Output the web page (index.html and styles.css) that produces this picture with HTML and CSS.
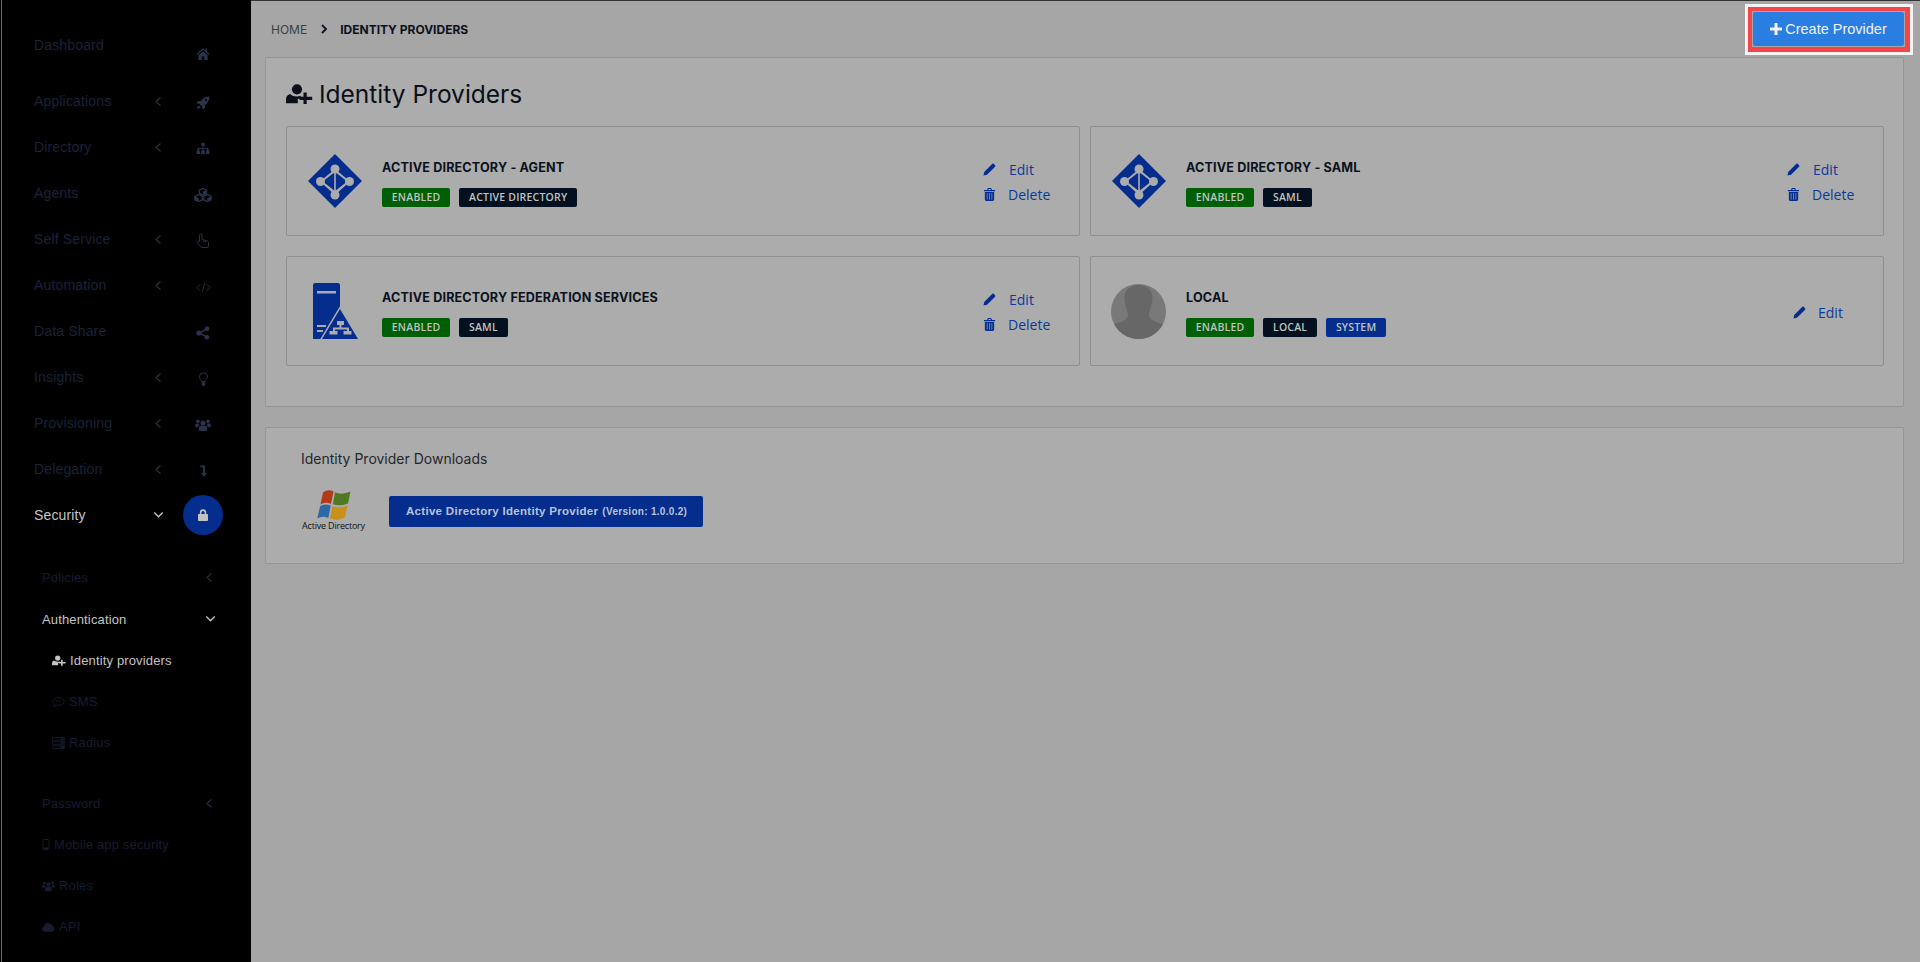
FILE: index.html
```html
<!DOCTYPE html>
<html lang="en">
<head>
<meta charset="utf-8">
<title>Identity Providers</title>
<link rel="stylesheet" href="styles.css">
</head>
<body>
<svg class="defs" width="0" height="0" aria-hidden="true">
  <symbol id="i-chev-left" viewBox="0 0 8 11"><path d="M6.500 1.500 2 5.500l4.500 4" fill="none" stroke="currentColor" stroke-width="1.200"/></symbol>
  <symbol id="i-chev-down" viewBox="0 0 11 8"><path d="M1.300 1.500 5.500 5.700l4.200-4.200" fill="none" stroke="currentColor" stroke-width="1.400"/></symbol>
  <symbol id="i-home" viewBox="0 0 14 14"><path d="M7 1 0.500 7l.8.9L7 2.800l5.700 5.100.8-.9L11 4.700V1.500H9.600v2zM2.400 8.200V13h3.400V9.400h2.400V13h3.400V8.200L7 4.200z" fill="currentColor"/></symbol>
  <symbol id="i-rocket" viewBox="0 0 14 14"><path d="M13.500 .5C9.500 .6 6.800 2.300 4.800 5H2L.5 7.500l3 .4L6 10.500l.5 3L9 12V9.200c2.700-2 4.400-4.700 4.500-8.700zM10 3a1 1 0 1 1 0 2 1 1 0 0 1 0-2zM3 9.500c-1.200.4-1.800 1.700-2 3.500 1.800-.2 3.100-.8 3.500-2z" fill="currentColor"/></symbol>
  <symbol id="i-sitemap" viewBox="0 0 14 14"><path d="M5.300 1h3.400v3H7.500v2h5v2.500h1V12h-3.500V8.500h1V7.100H7.500v1.400h1.200V12H5.300V8.500h1.200V7.100H3v1.400h1V12H.5V8.500h1V6h5V4H5.300z" fill="currentColor"/></symbol>
  <symbol id="i-cubes" viewBox="0 0 18 14"><path d="M9 .5l3.600 1.400v3.400L9 6.800 5.400 5.300V1.900zM4.600 6.600l3.700 1.500v3.700L4.600 13.500.9 11.800V8.100zM13.400 6.600l3.700 1.500v3.700l-3.700 1.700-3.700-1.700V8.100z" fill="none" stroke="currentColor" stroke-width="1.300"/><path d="M9 3.600v3.200L12.600 5.300V2.100zM4.600 10v3.500l-3.700-1.700V8.300zM13.400 10v3.500l3.700-1.700V8.300z" fill="currentColor"/></symbol>
  <symbol id="i-hand" viewBox="0 0 14 16"><path d="M3.500 8.500V2.200a1.200 1.200 0 0 1 2.400 0V6.500l5 1.200c1 .3 1.600 1 1.600 2V12c0 .8-.3 1.500-.6 2.500H5.500L1.200 10c-1-1.300.8-2.700 2.300-1.500zM7.800 7v2M9.600 7.400v2" fill="none" stroke="currentColor" stroke-width="1"/></symbol>
  <symbol id="i-code" viewBox="0 0 16 12"><path d="M4.500 2.500 1 6l3.500 3.500M11.500 2.500 15 6l-3.500 3.500M9.500 1 6.500 11" fill="none" stroke="currentColor" stroke-width="1"/></symbol>
  <symbol id="i-share" viewBox="0 0 14 14"><path d="M11 2.800 3 7l8 4.200" fill="none" stroke="currentColor" stroke-width="1.500"/><circle cx="11" cy="2.800" r="2.300" fill="currentColor"/><circle cx="3" cy="7" r="2.600" fill="currentColor"/><circle cx="11" cy="11.200" r="2.300" fill="currentColor"/></symbol>
  <symbol id="i-bulb" viewBox="0 0 10 15"><path d="M3.300 9.500C3 8 1 7 1 4.800a4 4 0 0 1 8 0C9 7 7 8 6.700 9.500z" fill="none" stroke="currentColor" stroke-width="1"/><path d="M3.200 10.300h3.600v2l-1 1.700H4.200l-1-1.700z" fill="currentColor"/></symbol>
  <symbol id="i-users" viewBox="0 0 16 14"><circle cx="8" cy="5" r="2.500" fill="currentColor"/><circle cx="3" cy="3.200" r="1.800" fill="currentColor"/><circle cx="13" cy="3.200" r="1.800" fill="currentColor"/><path d="M4 13V9.500C4 8.300 5 7.800 6 7.800h4c1 0 2 .5 2 1.700V13zM.3 9V7c0-1 .8-1.500 1.500-1.500h1.700c.2 1 .7 1.500 1.200 2C3.500 7.800 3 8.300 3 9zM15.700 9V7c0-1-.8-1.500-1.500-1.500h-1.700c-.2 1-.7 1.500-1.200 2 1.200.3 1.700.8 1.700 1.500z" fill="currentColor"/></symbol>
  <symbol id="i-level" viewBox="0 0 10 14"><path d="M1.500 1.500H7V9h2l-3 4-3-4h2V3.300H2.800z" fill="currentColor"/></symbol>
  <symbol id="i-lock" viewBox="0 0 10 12"><path d="M1.800 5V3.500a3.200 3.200 0 0 1 6.400 0V5H9.200c.4 0 .8.300.8.800v5.400c0 .4-.4.800-.8.800H.8a.8.8 0 0 1-.8-.8V5.800C0 5.300.4 5 .8 5zM3.400 5h3.200V3.500a1.600 1.600 0 0 0-3.200 0z" fill="currentColor"/></symbol>
  <symbol id="i-user-plus" viewBox="0 0 27 20"><circle cx="11" cy="5.300" r="5.100" fill="currentColor"/><path d="M0 19.300v-3.800c0-3.200 2-5.300 4.500-5.300 1.500 1.300 3.800 2.300 6.500 2.300 1.500 0 2.700-.3 3.800-.8v3.100h-3v4.500z" fill="currentColor"/><path d="M17.500 8.500h3.200v4.200h5.500V16h-5.500v4h-3.200v-4h-4v-3.300h4z" fill="currentColor"/></symbol>
  <symbol id="i-comment" viewBox="0 0 14 12"><path d="M7 1c3.300 0 6 1.900 6 4.300S10.300 9.600 7 9.600c-.7 0-1.300-.1-1.900-.2L2.200 11l.7-2.600C1.700 7.600 1 6.500 1 5.300 1 2.900 3.700 1 7 1z" fill="none" stroke="currentColor"/><circle cx="4.500" cy="5.300" r=".8" fill="currentColor"/><circle cx="7" cy="5.300" r=".8" fill="currentColor"/><circle cx="9.500" cy="5.300" r=".8" fill="currentColor"/></symbol>
  <symbol id="i-server" viewBox="0 0 12 11"><path d="M.5 .5h11v2.400H.5zM.5 4.300h11v2.400H.5zM.5 8.100h11v2.400H.5z" fill="none" stroke="currentColor" stroke-width=".8"/><path d="M8 1h3v1.400H8zM8 4.800h3v1.400H8zM8 8.600h3V10H8z" fill="currentColor"/></symbol>
  <symbol id="i-mobile" viewBox="0 0 7 11"><rect x=".5" y=".5" width="6" height="10" rx="1" fill="none" stroke="currentColor" stroke-width=".9"/><path d="M1 8.500h5V10H1z" fill="currentColor"/></symbol>
  <symbol id="i-cloud" viewBox="0 0 14 10"><path d="M3.200 10a3 3 0 0 1-.8-5.900A3.800 3.800 0 0 1 9.400 2.400 2.500 2.500 0 0 1 11.700 4.600 2.800 2.800 0 0 1 11 10z" fill="currentColor"/></symbol>
  <symbol id="i-pencil" viewBox="0 0 14 14"><path d="M.5 13.500 1.300 9.700 9 2l3 3-7.700 7.700zM9.900 1.100c.6-.6 1.300-.6 1.800-.1l1.300 1.300c.5.500.5 1.200-.1 1.800l-.9.900-3-3z" fill="currentColor"/></symbol>
  <symbol id="i-trash" viewBox="0 0 12 14"><path d="M4.300 0h3.400l1 2.200H12v1.200H0V2.200h3.300zM5 1.100l-.4 1.100h2.800L7 1.100zM1 4.300h10v8.200c0 .9-.6 1.500-1.400 1.500H2.400C1.600 14 1 13.400 1 12.500z" fill="currentColor"/><path d="M3.500 5.500v7M6 5.500v7M8.500 5.500v7" stroke="#acacac" stroke-width=".7"/></symbol>
  <symbol id="i-plus" viewBox="0 0 12 12"><path d="M4.500 0h3v4.500H12v3H7.500V12h-3V7.500H0v-3h4.500z" fill="currentColor"/></symbol>
  <symbol id="i-crumb" viewBox="0 0 8 10"><path d="M2 1l4 4-4 4" fill="none" stroke="currentColor" stroke-width="1.800"/></symbol>
  <symbol id="logo-ad" viewBox="0 0 54 54">
    <path d="M27 0 54 27 27 54 0 27z" fill="#042d8e"/>
    <path d="M27 15 42 27.500 27 41 12 27.500z" fill="#acacac"/>
    <path d="M26.200 18.500v18l-11.400-9zM27.800 18.500v18l11.400-9z" fill="#042d8e"/>
    <circle cx="27" cy="15" r="4.500" fill="#acacac"/><circle cx="27" cy="41" r="4.500" fill="#acacac"/><circle cx="12.500" cy="27.500" r="4.500" fill="#acacac"/><circle cx="41.500" cy="27.500" r="4.500" fill="#acacac"/>
  </symbol>
  <symbol id="logo-adfs" viewBox="0 0 45 56">
    <path d="M2 0h23c1 0 2 1 2 2v54H0V2C0 1 1 0 2 0z" fill="#042d8e"/>
    <path d="M4 8h19v2.500H4zM4 42h9v2H4zM4 47h6v2H4z" fill="#acacac"/>
    <path d="M27 26 45 56H9z" fill="#042d8e" stroke="#acacac" stroke-width="3" paint-order="stroke" stroke-linejoin="miter"/>
    <path d="M24 38h7v4h-2.500v2.500H36V48h2.500v3.500h-8V48H34v-1.500h-12V48h2.500v3.500h-8V48H20v-3.500h6.500V42H24z" fill="#acacac"/>
  </symbol>
  <symbol id="logo-local" viewBox="0 0 55 55">
    <circle cx="27.500" cy="27.500" r="27.500" fill="#797979"/>
    <path d="M27.500 1c8 0 14 5 14 13 0 7-3 11-3.500 17 0 3 3 5 7 7l7 2.500C47 49 38 55 27.500 55S7.500 49 3 39.800l7-1.800c4-2 7-4 7-7-.5-6-3.500-10-3.500-17 0-8 6-13 14-13z" fill="#676767"/>
  </symbol>
  <symbol id="logo-win" viewBox="0 0 34 30">
    <path d="M6 2.500c3.500-2.500 7-3 10.500-1L14 14c-3.500-1.800-7-1.500-10.500.5z" fill="#b23a18"/>
    <path d="M18 2.200c4 2 8.500 2 15.500-.6L31 13.500c-6 2.300-10.500 2.300-15 .8z" fill="#4f7a22"/>
    <path d="M3.200 16c3.500-2 7-2 10.500-.3L11.300 28c-3.800-1.800-7.300-1.500-11 .3z" fill="#2c6aa5"/>
    <path d="M15.500 16.200c4.500 1.500 9 1.500 15-.8L28 27c-5.500 3.500-10.500 3-15 1.500z" fill="#c9911a"/>
  </symbol>
</svg>

<aside class="sidebar">
  <nav class="nav">
    <a class="nav-row nav-first"><span class="nav-label">Dashboard</span><span class="nav-chev"></span><span class="nav-icon nav-icon-home"><svg class="ic14"><use href="#i-home"/></svg></span></a>
    <a class="nav-row"><span class="nav-label">Applications</span><span class="nav-chev"><svg class="chev"><use href="#i-chev-left"/></svg></span><span class="nav-icon"><svg class="ic14"><use href="#i-rocket"/></svg></span></a>
    <a class="nav-row"><span class="nav-label">Directory</span><span class="nav-chev"><svg class="chev"><use href="#i-chev-left"/></svg></span><span class="nav-icon"><svg class="ic14"><use href="#i-sitemap"/></svg></span></a>
    <a class="nav-row"><span class="nav-label">Agents</span><span class="nav-chev"></span><span class="nav-icon"><svg class="ic18"><use href="#i-cubes"/></svg></span></a>
    <a class="nav-row"><span class="nav-label">Self Service</span><span class="nav-chev"><svg class="chev"><use href="#i-chev-left"/></svg></span><span class="nav-icon"><svg class="ic-hand"><use href="#i-hand"/></svg></span></a>
    <a class="nav-row"><span class="nav-label">Automation</span><span class="nav-chev"><svg class="chev"><use href="#i-chev-left"/></svg></span><span class="nav-icon"><svg class="ic15"><use href="#i-code"/></svg></span></a>
    <a class="nav-row"><span class="nav-label">Data Share</span><span class="nav-chev"></span><span class="nav-icon"><svg class="ic14"><use href="#i-share"/></svg></span></a>
    <a class="nav-row"><span class="nav-label">Insights</span><span class="nav-chev"><svg class="chev"><use href="#i-chev-left"/></svg></span><span class="nav-icon"><svg class="ic15"><use href="#i-bulb"/></svg></span></a>
    <a class="nav-row"><span class="nav-label">Provisioning</span><span class="nav-chev"><svg class="chev"><use href="#i-chev-left"/></svg></span><span class="nav-icon"><svg class="ic16"><use href="#i-users"/></svg></span></a>
    <a class="nav-row"><span class="nav-label">Delegation</span><span class="nav-chev"><svg class="chev"><use href="#i-chev-left"/></svg></span><span class="nav-icon"><svg class="ic14"><use href="#i-level"/></svg></span></a>
    <a class="nav-row nav-active"><span class="nav-label">Security</span><span class="nav-chev"><svg class="chev-d"><use href="#i-chev-down"/></svg></span><span class="nav-icon nav-circle"><svg class="ic12"><use href="#i-lock"/></svg></span></a>
  </nav>
  <div class="sub">
    <a class="sub-row sub-major"><span class="sub-label">Policies</span><svg class="chev"><use href="#i-chev-left"/></svg></a>
    <a class="sub-row sub-major sub-active"><span class="sub-label">Authentication</span><svg class="chev-d"><use href="#i-chev-down"/></svg></a>
    <a class="sub-row sub-leaf sub-active"><svg class="leaf-ic-up"><use href="#i-user-plus"/></svg><span>Identity providers</span></a>
    <a class="sub-row sub-leaf"><svg class="leaf-ic"><use href="#i-comment"/></svg><span>SMS</span></a>
    <a class="sub-row sub-leaf"><svg class="leaf-ic"><use href="#i-server"/></svg><span>Radius</span></a>
    <a class="sub-row sub-major sub-gap"><span class="sub-label">Password</span><svg class="chev"><use href="#i-chev-left"/></svg></a>
    <a class="sub-row"><svg class="leaf-mobile"><use href="#i-mobile"/></svg><span>Mobile app security</span></a>
    <a class="sub-row"><svg class="leaf-ic"><use href="#i-users"/></svg><span>Roles</span></a>
    <a class="sub-row"><svg class="leaf-ic"><use href="#i-cloud"/></svg><span>API</span></a>
  </div>
</aside>

<main class="main">
  <header class="topbar">
    <div class="crumbs">
      <span class="crumb-home">HOME</span>
      <svg class="crumb-sep"><use href="#i-crumb"/></svg>
      <span class="crumb-here">IDENTITY PROVIDERS</span>
    </div>
    <div class="btn-frame">
      <button class="btn-create"><svg class="btn-plus"><use href="#i-plus"/></svg>Create Provider</button>
    </div>
  </header>

  <section class="panel panel-providers">
    <h1 class="page-title"><svg class="title-ic"><use href="#i-user-plus"/></svg>Identity Providers</h1>
    <div class="cards">
      <article class="card">
        <svg class="logo logo-54"><use href="#logo-ad"/></svg>
        <div class="card-body">
          <h2 class="card-title">ACTIVE DIRECTORY - AGENT</h2>
          <div class="badges"><span class="badge b-green">ENABLED</span><span class="badge b-dark">ACTIVE DIRECTORY</span></div>
        </div>
        <div class="actions">
          <a class="action"><svg class="act-ic"><use href="#i-pencil"/></svg><span class="act-edit">Edit</span></a>
          <a class="action"><svg class="act-ic"><use href="#i-trash"/></svg><span>Delete</span></a>
        </div>
      </article>
      <article class="card">
        <svg class="logo logo-54"><use href="#logo-ad"/></svg>
        <div class="card-body">
          <h2 class="card-title">ACTIVE DIRECTORY - SAML</h2>
          <div class="badges"><span class="badge b-green">ENABLED</span><span class="badge b-dark">SAML</span></div>
        </div>
        <div class="actions">
          <a class="action"><svg class="act-ic"><use href="#i-pencil"/></svg><span class="act-edit">Edit</span></a>
          <a class="action"><svg class="act-ic"><use href="#i-trash"/></svg><span>Delete</span></a>
        </div>
      </article>
      <article class="card">
        <svg class="logo logo-adfs"><use href="#logo-adfs"/></svg>
        <div class="card-body">
          <h2 class="card-title">ACTIVE DIRECTORY FEDERATION SERVICES</h2>
          <div class="badges"><span class="badge b-green">ENABLED</span><span class="badge b-dark">SAML</span></div>
        </div>
        <div class="actions">
          <a class="action"><svg class="act-ic"><use href="#i-pencil"/></svg><span class="act-edit">Edit</span></a>
          <a class="action"><svg class="act-ic"><use href="#i-trash"/></svg><span>Delete</span></a>
        </div>
      </article>
      <article class="card">
        <svg class="logo logo-55"><use href="#logo-local"/></svg>
        <div class="card-body">
          <h2 class="card-title">LOCAL</h2>
          <div class="badges"><span class="badge b-green">ENABLED</span><span class="badge b-dark">LOCAL</span><span class="badge b-blue">SYSTEM</span></div>
        </div>
        <div class="actions actions-single">
          <a class="action"><svg class="act-ic"><use href="#i-pencil"/></svg><span>Edit</span></a>
        </div>
      </article>
    </div>
  </section>

  <section class="panel panel-downloads">
    <h3 class="dl-title">Identity Provider Downloads</h3>
    <div class="dl-row">
      <div class="dl-logo"><svg class="win"><use href="#logo-win"/></svg><span class="dl-logo-text">Active Directory</span></div>
      <a class="dl-btn">Active Directory Identity Provider <small>(Version: 1.0.0.2)</small></a>
    </div>
  </section>
</main>
</body>
</html>
```
FILE: styles.css
```css
* { box-sizing: border-box; }
html, body { margin: 0; height: 962px; overflow: hidden; }
body {
  display: flex;
  background: #a6a6a6;
  font-family: "Liberation Sans", Arial, sans-serif;
}
.defs { position: absolute; }
a { display: flex; }

/* Sidebar */
.sidebar {
  width: 251px;
  flex: none;
  height: 962px;
  background: #000;
  box-shadow: inset 1px 0 #000, inset 2px 0 #6e6e6e;
  padding-top: 22px;
  color: #1b2239;
  font-size: 14px;
  letter-spacing: .15px;
}
.nav { display: flex; flex-direction: column; }
.nav-row {
  display: flex;
  align-items: center;
  height: 46px;
  padding-left: 34px;
}
.nav-first { margin-bottom: 10px; }
.nav-label { width: 118px; }
.nav-chev { width: 12px; display: flex; justify-content: center; color: #2a3040; }
.nav-icon {
  width: 40px;
  height: 24px;
  margin-left: 19px;
  margin-top: 4px;
  display: flex;
  align-items: center;
  justify-content: center;
  color: #2a3349;
}
.nav-icon-home { margin-top: 18px; }
.nav-active { color: #c4c4c4; }
.nav-active .nav-chev { color: #c4c4c4; }
.nav-circle {
  height: 40px;
  margin-top: 0;
  border-radius: 50%;
  background: #042d8e;
  color: #c2c2c2;
}
.chev { width: 8px; height: 11px; flex: none; }
.chev-d { width: 11px; height: 8px; flex: none; }
.ic12 { width: 10px; height: 12px; }
.ic14 { width: 14px; height: 14px; }
.ic15 { width: 15px; height: 15px; }
.ic16 { width: 16px; height: 14px; }
.ic18 { width: 18px; height: 14px; }
.ic-hand { width: 14px; height: 16px; }

.sub {
  display: flex;
  flex-direction: column;
  padding-top: 18px;
  color: #171d30;
  font-size: 13px;
  letter-spacing: .15px;
}
.sub-row {
  display: flex;
  align-items: center;
  height: 41px;
  padding-left: 42px;
  gap: 4px;
  color: #171d30;
}
.sub-major { height: 42px; }
.sub-leaf { padding-left: 52px; height: 41px; }
.sub-gap { margin-top: 19px; }
.sub-label { width: 158px; }
.sub-major .chev { color: #262b3a; margin-left: 1px; }
.sub-active { color: #c4c4c4; }
.sub-active .chev-d { color: #c4c4c4; margin-left: 1px; }
.leaf-ic { width: 13px; height: 12px; }
.leaf-mobile { width: 8px; height: 11px; }
.leaf-ic-up { width: 14px; height: 11px; }

/* Main */
.main {
  flex: 1;
  min-width: 0;
  height: 962px;
  border-top: 1px solid #333;
  padding: 0 16px 0 14px;
}
.topbar {
  height: 56px;
  display: flex;
  align-items: center;
  justify-content: space-between;
  padding: 0 0 0 6px;
}
.crumbs { display: flex; align-items: center; font-family: Inter, "Liberation Sans", sans-serif; font-size: 12px; }
.crumb-home { color: #3a3f48; }
.crumb-sep { width: 8px; height: 10px; margin: 0 12px 0 13px; color: #0a1220; }
.crumb-here { font-weight: 700; font-size: 12px; color: #0a1220; }
.btn-frame {
  margin-right: -6px;
  padding: 1px;
  border: solid #f5444a;
  border-width: 4px 5px 5px 4px;
  outline: 3px solid #f4f4f4;
}
.btn-create {
  width: 151px;
  height: 34px;
  display: flex;
  align-items: center;
  justify-content: center;
  gap: 3px;
  border: 0;
  border-radius: 2px;
  background: #2a7de1;
  color: #f2f2f2;
  font: 14.500px "Liberation Sans", Arial, sans-serif;
}
.btn-plus { width: 12px; height: 12px; }

.panel {
  width: 1639px;
  background: #acacac;
  border: 1px solid #959595;
  border-radius: 2px;
}
.panel-providers { height: 350px; padding: 0 20px; }
.page-title {
  margin: 0;
  height: 68px;
  padding-top: 3px;
  display: flex;
  align-items: center;
  gap: 6px;
  font: 400 24.500px Inter, "Liberation Sans", sans-serif;
  color: #0a0f18;
}
.title-ic { width: 27px; height: 20px; }
.cards {
  display: grid;
  grid-template-columns: 794px 794px;
  grid-auto-rows: 110px;
  column-gap: 10px;
  row-gap: 20px;
}
.card {
  display: flex;
  align-items: center;
  border: 1px solid #8f8f8f;
  border-radius: 2px;
}
.logo { flex: none; }
.logo-54 { width: 54px; height: 54px; margin-left: 21px; margin-right: 20px; }
.logo-55 { width: 55px; height: 55px; margin-left: 20px; margin-right: 20px; }
.logo-adfs { width: 45px; height: 56px; margin-left: 26px; margin-right: 24px; }
.card-body { flex: 1; display: flex; flex-direction: column; gap: 13px; padding-top: 5px; }
.card-title {
  margin: 0;
  font: 700 12.600px/14px Inter, "Liberation Sans", sans-serif;
  letter-spacing: .15px;
  color: #0a1220;
}
.badges { display: flex; gap: 9px; }
.badge {
  height: 19px;
  padding: 0 9.800px;
  display: flex;
  align-items: center;
  border-radius: 2px;
  font: 600 10.500px "Open Sans", sans-serif;
  letter-spacing: .2px;
  color: #bfc4bf;
}
.b-green { background: #005f05; }
.b-dark { background: #02101f; }
.b-blue { background: #042d8e; }
.actions {
  flex: none;
  width: 66px;
  margin-right: 30px;
  padding-top: 1px;
  display: flex;
  flex-direction: column;
  align-items: flex-start;
  gap: 3px;
  color: #0b3a9c;
  font: 14px "Open Sans", sans-serif;
}
.actions-single { padding-left: 6px; padding-top: 3px; }
.action { display: flex; align-items: center; gap: 12px; height: 22px; }
.act-ic { width: 13px; height: 13px; flex: none; color: #042d8e; }
.act-edit { margin-left: 1px; }

.panel-downloads { height: 137px; margin-top: 20px; padding: 23px 0 0 35px; }
.dl-title {
  margin: 0;
  font: 400 14px/16px Inter, "Liberation Sans", sans-serif;
  color: #23272e;
}
.dl-row { display: flex; align-items: center; gap: 23px; margin-top: 23px; }
.dl-logo { width: 65px; display: flex; flex-direction: column; align-items: center; }
.win { width: 34px; height: 30px; }
.dl-logo-text { font: 9px/12px "Open Sans", sans-serif; letter-spacing: -.2px; color: #111; white-space: nowrap; }
.dl-btn {
  display: flex;
  align-items: baseline;
  gap: 4px;
  width: 314px;
  height: 31px;
  padding: 9px 0 0 17px;
  background: #042d8e;
  border-radius: 2px;
  color: #b9c2d6;
  font: 700 11.500px "Liberation Sans", sans-serif;
  letter-spacing: .3px;
  white-space: nowrap;
}
.dl-btn small { font-size: 10px; letter-spacing: .3px; }
```
